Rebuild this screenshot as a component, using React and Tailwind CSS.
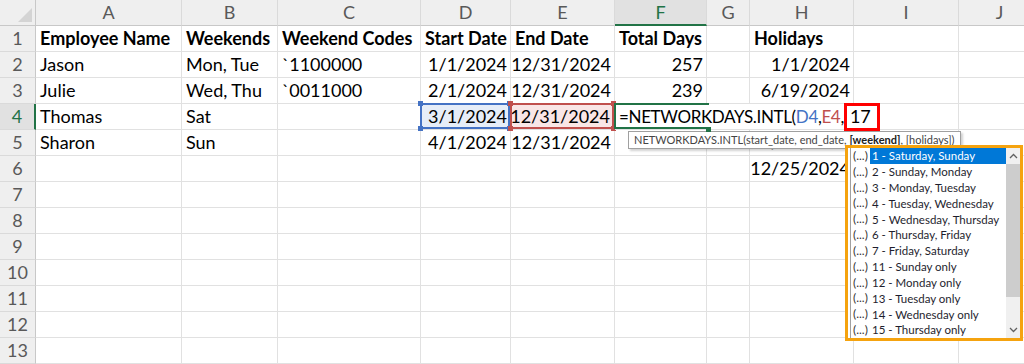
import clsx from 'clsx'

const COLS = ['A', 'B', 'C', 'D', 'E', 'F', 'G', 'H', 'I', 'J']
const RIGHT = [3, 4, 5, 7]

const ROWS = [
  ['Employee Name', 'Weekends', 'Weekend Codes', 'Start Date', 'End Date', 'Total Days', '', 'Holidays', '', ''],
  ['Jason', 'Mon, Tue', '`1100000', '1/1/2024', '12/31/2024', '257', '', '1/1/2024', '', ''],
  ['Julie', 'Wed, Thu', '`0011000', '2/1/2024', '12/31/2024', '239', '', '6/19/2024', '', ''],
  null,
  ['Sharon', 'Sun', '', '4/1/2024', '12/31/2024', '', '', '11/28/2024', '', ''],
  ['', '', '', '', '', '', '', '12/25/2024', '', ''],
]

const WEEKENDS = [
  '1 - Saturday, Sunday',
  '2 - Sunday, Monday',
  '3 - Monday, Tuesday',
  '4 - Tuesday, Wednesday',
  '5 - Wednesday, Thursday',
  '6 - Thursday, Friday',
  '7 - Friday, Saturday',
  '11 - Sunday only',
  '12 - Monday only',
  '13 - Tuesday only',
  '14 - Wednesday only',
  '15 - Thursday only',
]

function Corner() {
  return (
    <div className="h-[26px] bg-[#efefef] border-r border-b border-r-[#c8c8c8] border-b-[#c8c8c8] flex items-end justify-end pr-[3px] pb-[3px]">
      <svg width="14" height="14" viewBox="0 0 14 14">
        <polygon points="14,0 14,14 0,14" fill="#d4d4d4" />
      </svg>
    </div>
  )
}

function ColHead({ label, active }) {
  return (
    <div
      className={clsx(
        'h-[26px] flex items-center justify-center border-r border-r-[#dadada]',
        active
          ? 'bg-[#e1e1e1] text-[#217346] border-b-2 border-b-[#217346]'
          : 'bg-[#efefef] text-[#595959] border-b border-b-[#c8c8c8]'
      )}
    >
      {label}
    </div>
  )
}

function RowHead({ n, active }) {
  return (
    <div
      className={clsx(
        'h-[26px] flex items-center justify-center border-b border-b-[#dadada]',
        active
          ? 'bg-[#e1e1e1] text-[#217346] border-r-2 border-r-[#217346]'
          : 'bg-[#efefef] text-[#595959] border-r border-r-[#c8c8c8]'
      )}
    >
      {n}
    </div>
  )
}

function Cell({ children, right, bold, className }) {
  return (
    <div
      className={clsx(
        'h-[26px] flex items-center whitespace-nowrap border-r border-b border-[#e1e1e1]',
        right ? 'justify-end pr-[3px]' : 'pl-[4px]',
        bold && 'font-bold',
        className
      )}
    >
      {children}
    </div>
  )
}

function Handles({ color }) {
  const sq = `absolute w-[5px] h-[5px] ${color}`
  return (
    <>
      <span className={clsx(sq, '-left-[3px] -top-[3px]')} />
      <span className={clsx(sq, '-right-[2px] -top-[3px]')} />
      <span className={clsx(sq, '-left-[3px] -bottom-[2px]')} />
      <span className={clsx(sq, '-right-[2px] -bottom-[2px]')} />
    </>
  )
}

function EditRow() {
  return (
    <>
      <RowHead n={4} active />
      <Cell>Thomas</Cell>
      <Cell>Sat</Cell>
      <Cell />
      {/* D4 - start_date ref */}
      <div className="relative h-[26px] flex items-center justify-end pr-[3px] bg-[#e6edf8] border-r border-b border-[#e1e1e1]">
        <div className="absolute -left-px -top-px right-0 bottom-0 border-2 border-[#4472c4]" />
        <Handles color="bg-[#4472c4]" />
        3/1/2024
      </div>
      {/* E4 - end_date ref */}
      <div className="relative h-[26px] flex items-center justify-end pr-[4px] bg-[#f9e6e6] border-r border-b border-[#e1e1e1]">
        <div className="absolute -left-px -top-px right-0 bottom-0 border-2 border-[#c0504d]" />
        <Handles color="bg-[#c0504d]" />
        12/31/2024
      </div>
      {/* F4 - editing, text runs over G and H */}
      <div className="relative z-10 col-span-3 h-[26px] flex items-center whitespace-nowrap pl-[4px] bg-white border-b border-[#e1e1e1] text-[17px] tracking-[-0.35px]">
        <div className="absolute -left-px -top-px w-[95px] bottom-0 border-2 border-r-0 border-[#217346]" />
        <span className="absolute left-[91px] -bottom-[3px] w-[5px] h-[5px] bg-[#217346]" />
        <span>=NETWORKDAYS.INTL(</span>
        <span className="text-[#4472c4]">D4</span>
        <span>,</span>
        <span className="text-[#c0504d]">E4</span>
        <span>,</span>
        <span className="inline-flex items-center h-[28px] -my-[1px] pl-[3px] pr-[6px] border-[3px] border-[#ff0000] text-[18px] tracking-normal">17</span>
      </div>
      <Cell />
      <Cell />
    </>
  )
}

function Tooltip() {
  return (
    <div className="absolute left-[628px] top-[131px] h-[18px] flex items-center px-[5px] bg-white border border-[#a0a0a0] shadow-[2px_2px_2px_rgba(0,0,0,0.18)] whitespace-nowrap text-[11px] text-[#444]">
      NETWORKDAYS.INTL(start_date, end_date,&nbsp;<b className="text-[#222]">[weekend]</b>, [holidays])
    </div>
  )
}

function WeekendList() {
  return (
    <div className="absolute left-[845px] top-[145px] w-[178px] h-[196px] border-[3px] border-[#f5a30f] bg-white flex text-[11px] text-[#1e1e2e]">
      <div className="flex-1 ml-[2px] border-l border-[#a0a0a0] grid grid-rows-12">
        {WEEKENDS.map((w, i) => (
          <div key={w} className="flex items-center whitespace-nowrap">
            <span className="w-[19px] pl-[2px] text-[12px] text-[#333]">(...)</span>
            <span className={clsx('flex-1 h-full flex items-center pl-[2px] text-[11.5px]', i === 0 && 'bg-[#0078d7] text-white')}>{w}</span>
          </div>
        ))}
      </div>
      <div className="w-[14px] flex flex-col bg-[#f0f0f0]">
        <div className="h-[16px] flex items-center justify-center">
          <svg width="9" height="6" viewBox="0 0 9 6"><path d="M1 5 L4.5 1.5 L8 5" fill="none" stroke="#606060" strokeWidth="1.3" /></svg>
        </div>
        <div className="h-[133px] bg-[#cdcdcd]" />
        <div className="flex-1" />
        <div className="h-[16px] flex items-center justify-center">
          <svg width="9" height="6" viewBox="0 0 9 6"><path d="M1 1 L4.5 4.5 L8 1" fill="none" stroke="#606060" strokeWidth="1.3" /></svg>
        </div>
      </div>
    </div>
  )
}

export default function App() {
  const empty = Array.from({ length: 7 }, (_, i) => i + 7)
  return (
    <div className="relative w-[1024px] h-[364px] overflow-hidden bg-white font-['Lato','Liberation_Sans',sans-serif] text-[18px] text-black">
      <div className="grid grid-cols-[36px_146px_96px_143px_90px_104px_92px_43px_104px_105px_82px] w-[1041px]">
        <Corner />
        {COLS.map((c) => <ColHead key={c} label={c} active={c === 'F'} />)}

        {ROWS.map((row, r) =>
          row === null ? (
            <EditRow key="edit" />
          ) : (
            [
              <RowHead key={`h${r}`} n={r + 1} />,
              ...row.map((v, c) => (
                <Cell key={`${r}-${c}`} right={r > 0 && RIGHT.includes(c)} bold={r === 0}>
                  {v}
                </Cell>
              )),
            ]
          )
        )}

        {empty.map((n) => [
          <RowHead key={`h${n}`} n={n} />,
          ...COLS.map((c) => <Cell key={`${n}-${c}`} />),
        ])}
      </div>

      <Tooltip />
      <WeekendList />
    </div>
  )
}
